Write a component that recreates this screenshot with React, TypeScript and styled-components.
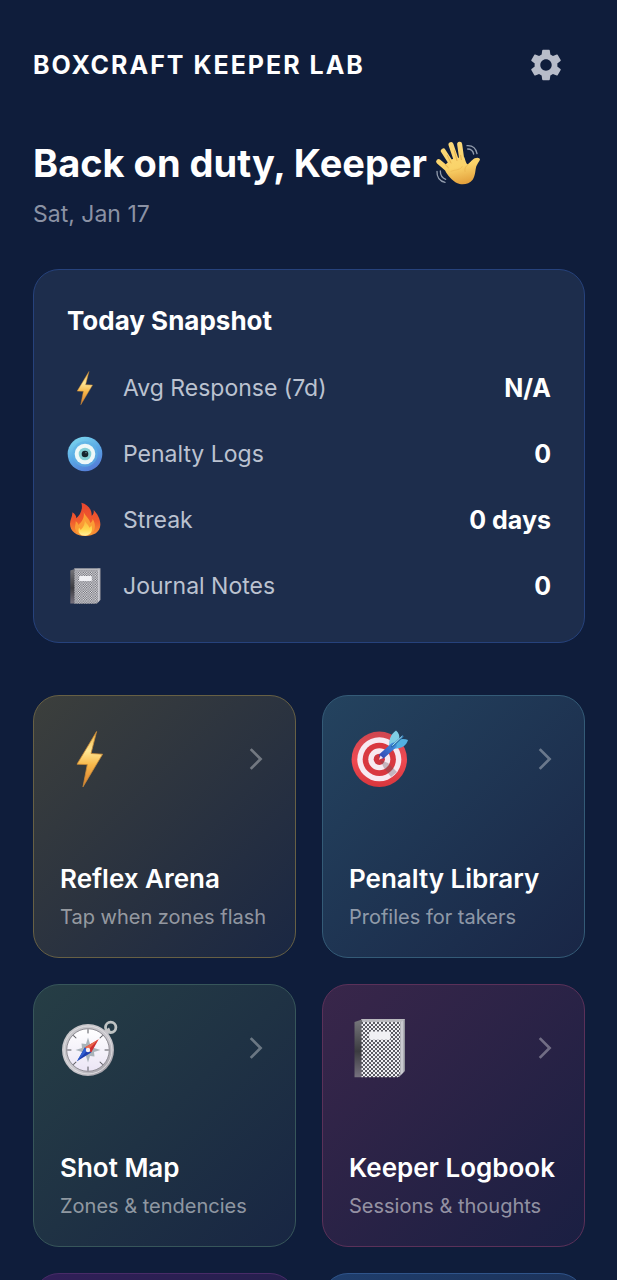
import React, { useId } from "react";
import styled, { createGlobalStyle } from "styled-components";
import { MdArrowForwardIos, MdSettings } from "react-icons/md";

const GlobalStyle = createGlobalStyle`
  *, *::before, *::after { box-sizing: border-box; }
  body { margin: 0; background: #0f1d3b; }
`;

const Screen = styled.main`
  height: 100vh;
  overflow-y: auto;
  scrollbar-width: none;
  padding: 25px 32px 32px 33px;
  background: #0f1d3b;
  color: #fff;
  font-family: Inter, "Liberation Sans", sans-serif;
`;

const TopBar = styled.header`
  display: flex;
  align-items: center;
  justify-content: space-between;
`;

const Brand = styled.span`
  font-size: 25px;
  line-height: 36px;
  font-weight: 700;
  letter-spacing: 2px;
`;

const IconButton = styled.button`
  display: grid;
  place-items: center;
  width: 79px;
  height: 79px;
  padding: 0;
  border: 0;
  border-radius: 50%;
  background: none;
  color: #b7bcc9;
  cursor: pointer;
`;

const Greeting = styled.h1`
  display: flex;
  align-items: center;
  gap: 8px;
  margin: 33px 0 9px;
  font-size: 38px;
  line-height: 52px;
  font-weight: 700;
`;

const DateLine = styled.p`
  margin: 0;
  font-size: 23px;
  line-height: 33px;
  color: #8b92a4;
`;

const Snapshot = styled.section`
  margin-top: 38px;
  padding: 33px 33px 36px;
  border: 1px solid #26427c;
  border-radius: 26px;
  background: #1d2d4c;
`;

const SnapshotTitle = styled.h2`
  margin: 0 0 29px;
  font-size: 26px;
  line-height: 36px;
  font-weight: 700;
`;

const StatList = styled.dl`
  display: grid;
  gap: 26px;
  margin: 0;
`;

const Stat = styled.div`
  display: flex;
  align-items: center;
  height: 40px;
`;

const StatLabel = styled.dt`
  display: flex;
  align-items: center;
  gap: 20px;
  flex: 1;
  font-size: 23px;
  line-height: 33px;
  color: #bbc2d0;
`;

const StatValue = styled.dd`
  margin: 0;
  font-size: 25px;
  line-height: 36px;
  font-weight: 700;
`;

const TileGrid = styled.nav`
  display: grid;
  grid-template-columns: 1fr 1fr;
  gap: 26px;
  margin-top: 52px;
`;

const Tile = styled.a<{ $from: string; $to: string; $edge: string }>`
  display: flex;
  flex-direction: column;
  justify-content: space-between;
  aspect-ratio: 1;
  min-width: 0;
  padding: 26px;
  border: 1px solid ${(p) => p.$edge};
  border-radius: 26px;
  background: linear-gradient(135deg, ${(p) => p.$from}, ${(p) => p.$to}) border-box;
  color: #fff;
  text-decoration: none;
`;

const TileTop = styled.span`
  display: flex;
  align-items: center;
  justify-content: space-between;
  height: 73px;
  color: rgba(255, 255, 255, 0.34);
`;

const TileText = styled.span`
  display: grid;
  gap: 6px;
  white-space: nowrap;
`;

const TileTitle = styled.strong`
  font-size: 26px;
  line-height: 36px;
  font-weight: 600;
`;

const TileHint = styled.span`
  font-size: 20px;
  line-height: 28px;
  color: rgba(255, 255, 255, 0.52);
`;

type ArtProps = { size: number };

function Bolt({ size }: ArtProps) {
  const id = useId();
  return (
    <svg width={size} height={size} viewBox="0 0 60 60" aria-hidden="true">
      <defs>
        <linearGradient id={id} x1="0" y1="0" x2="0" y2="1">
          <stop offset="0" stopColor="#f3b544" />
          <stop offset="0.35" stopColor="#ffe795" />
          <stop offset="0.6" stopColor="#f8b94b" />
          <stop offset="1" stopColor="#d97a2c" />
        </linearGradient>
      </defs>
      <path
        d="M36.6 2.5 L31 24.5 L42.6 25.2 L23 57.8 L27.3 35.6 L17 35.2 Z"
        fill={`url(#${id})`}
        stroke="#c98a37"
        strokeWidth="0.8"
        strokeLinejoin="round"
      />
    </svg>
  );
}

function Nazar({ size }: ArtProps) {
  const id = useId();
  return (
    <svg width={size} height={size} viewBox="36 227 108 108" aria-hidden="true">
      <defs>
        <linearGradient id={id} x1="0.2" y1="0" x2="0.7" y2="1">
          <stop offset="0" stopColor="#7dd8ef" />
          <stop offset="0.5" stopColor="#5aa8e6" />
          <stop offset="1" stopColor="#5479d6" />
        </linearGradient>
      </defs>
      <circle cx="90" cy="281" r="52" fill={`url(#${id})`} />
      <circle cx="90" cy="281" r="38" fill="#5fb2e4" opacity="0.6" />
      <circle cx="90" cy="281" r="31" fill="#eef8f8" />
      <circle cx="90" cy="281" r="19" fill="#83cfd6" />
      <circle cx="90" cy="281" r="10" fill="#15242e" />
      <circle cx="93" cy="277" r="2" fill="#7da6b1" />
    </svg>
  );
}

function Flame({ size }: ArtProps) {
  const id = useId();
  return (
    <svg width={size} height={size} viewBox="36 36 108 108" aria-hidden="true">
      <defs>
        <linearGradient id={`${id}o`} x1="0" y1="0" x2="0" y2="1">
          <stop offset="0" stopColor="#e8452e" />
          <stop offset="0.55" stopColor="#f05a2d" />
          <stop offset="1" stopColor="#f99a35" />
        </linearGradient>
        <linearGradient id={`${id}i`} x1="0" y1="0" x2="0" y2="1">
          <stop offset="0" stopColor="#fbae3b" />
          <stop offset="0.6" stopColor="#ffd64c" />
          <stop offset="1" stopColor="#fff09a" />
        </linearGradient>
      </defs>
      <path
        d="M79 38 C98 43 111 58 110 77 C115 75 117 68 116 60 C127 71 137 88 136 105 C135 126 116 138 91 138 C65 138 45 124 45 102 C45 88 53 79 52 67 C60 71 64 78 64 85 C75 75 85 58 79 38 Z"
        fill={`url(#${id}o)`}
      />
      <path
        d="M86 66 C91 80 104 85 106 99 C110 97 113 92 113 87 C122 100 122 117 114 126 C108 134 100 137 90 137 C75 137 62 130 60 115 C59 107 63 102 62 94 C67 97 70 101 70 105 C82 94 89 82 86 66 Z"
        fill="#fb9c35"
      />
      <path
        d="M89 88 C90 99 101 104 103 113 C106 112 108 109 109 106 C115 121 108 136 91 137 C75 137 67 127 72 113 C74 115 76 117 77 120 C86 112 91 101 89 88 Z"
        fill={`url(#${id}i)`}
      />
    </svg>
  );
}

function Notebook({ size }: ArtProps) {
  const id = useId();
  return (
    <svg width={size} height={size} viewBox="0 0 60 60" aria-hidden="true">
      <defs>
        <pattern id={`${id}p`} width="4" height="4" patternUnits="userSpaceOnUse">
          <rect width="4" height="4" fill="#f0f0f4" />
          <rect width="2" height="2" fill="#5c5c64" />
          <rect x="2" y="2" width="2" height="2" fill="#5c5c64" />
        </pattern>
        <linearGradient id={`${id}s`} x1="0" y1="0" x2="0" y2="1">
          <stop offset="0" stopColor="#77777c" />
          <stop offset="0.55" stopColor="#3b3b40" />
          <stop offset="1" stopColor="#77727f" />
        </linearGradient>
        <linearGradient id={`${id}e`} gradientUnits="userSpaceOnUse" x1="50" y1="0" x2="56" y2="0">
          <stop offset="0" stopColor="#8a8a92" />
          <stop offset="0.5" stopColor="#d7d7dd" />
          <stop offset="1" stopColor="#85858e" />
        </linearGradient>
      </defs>
      <path d="M12 1 H56 V53 L50 59 H12 Z" fill={`url(#${id}e)`} />
      <path d="M12 1 H56 L52 4 H13 Z" fill="#b9b9be" />
      <path d="M5.5 4 L13 1.5 V59.3 H5.5 Z" fill={`url(#${id}s)`} />
      <path d="M12.5 4 H51 V56 L49 59.3 H12.5 Z" fill={`url(#${id}p)`} />
      <rect x="20.3" y="13.5" width="21" height="8.2" rx="1" fill="#f0f0f4" />
    </svg>
  );
}

function Target({ size }: ArtProps) {
  const id = useId();
  return (
    <svg width={size} height={size} viewBox="0 0 60 60" aria-hidden="true">
      <defs>
        <linearGradient id={`${id}r`} x1="0" y1="0" x2="0" y2="1">
          <stop offset="0" stopColor="#cf4650" />
          <stop offset="0.5" stopColor="#ef4a52" />
          <stop offset="1" stopColor="#d8363d" />
        </linearGradient>
        <linearGradient id={`${id}d`} gradientUnits="userSpaceOnUse" x1="32" y1="28" x2="46" y2="15">
          <stop offset="0" stopColor="#3549b4" />
          <stop offset="1" stopColor="#3f8fe0" />
        </linearGradient>
      </defs>
      <circle cx="30.3" cy="30.3" r="27.7" fill={`url(#${id}r)`} />
      <circle cx="30.3" cy="30.3" r="22" fill="#f7e9f1" />
      <circle cx="30.3" cy="30.3" r="16.6" fill="#d93840" />
      <circle cx="30.3" cy="30.3" r="11" fill="#f7e9f1" />
      <circle cx="30.3" cy="30.3" r="5.6" fill="#cf3540" />
      <path d="M31 31 L39 34 L48 43 L42 48 L35 39 Z" fill="#66555f" opacity="0.35" />
      <path d="M40 16.5 C40 10 42 5 47 1.5 C50 4 51 7 50 11 L45.5 16 Z" fill="#7fcde4" />
      <path d="M44.8 16.5 L49 11 C52 9.5 56 9.5 59 11 C57.5 16 53.5 19.5 45 19.8 Z" fill="#52b0e0" />
      <path d="M33.4 26.6 L44.6 16.6" stroke={`url(#${id}d)`} strokeWidth="6" strokeLinecap="round" />
      <path d="M43 17.5 L53.5 7.5" stroke="#2c6fa8" strokeWidth="2.2" strokeLinecap="round" />
      <path d="M43.6 16.4 L53 7.5" stroke="#a5e2f2" strokeWidth="1" strokeLinecap="round" />
      <path d="M30 30.7 L31.6 26.5 L34 29 Z" fill="#f5e8f0" />
    </svg>
  );
}

const COMPASS_TICKS = [0, 45, 90, 135, 180, 225, 270, 315];

function Compass({ size }: ArtProps) {
  const id = useId();
  return (
    <svg width={size} height={size} viewBox="0 0 60 60" aria-hidden="true">
      <defs>
        <linearGradient id={`${id}c`} x1="0" y1="0" x2="1" y2="1">
          <stop offset="0" stopColor="#c4c4c7" />
          <stop offset="0.6" stopColor="#c9c6cc" />
          <stop offset="1" stopColor="#938f98" />
        </linearGradient>
        <linearGradient id={`${id}f`} x1="0" y1="0" x2="0" y2="1">
          <stop offset="0" stopColor="#ffffff" />
          <stop offset="1" stopColor="#ebe5f5" />
        </linearGradient>
      </defs>
      <circle cx="50.7" cy="9.3" r="5.2" fill="none" stroke="#bfc3c3" strokeWidth="2.8" />
      <path d="M44 13 L49 9.5 L50.5 12.5 L47.5 17 Z" fill="#c3c3c5" />
      <circle cx="28" cy="32" r="26" fill={`url(#${id}c)`} />
      <circle cx="28" cy="32" r="24" fill="none" stroke="#dedde0" strokeWidth="1" />
      <circle cx="28" cy="32" r="21.3" fill={`url(#${id}f)`} stroke="#8d8b92" strokeWidth="1" />
      {COMPASS_TICKS.map((angle) => (
        <path
          key={angle}
          d="M28 11.2 V15.4"
          stroke="#55555b"
          strokeWidth="1"
          transform={`rotate(${angle} 28 32)`}
        />
      ))}
      <path
        d="M28 19.5 L30 26 L34.5 25.5 L34 30 L40.5 32 L34 34 L34.5 38.5 L30 38 L28 44.5 L26 38 L21.5 38.5 L22 34 L15.5 32 L22 30 L21.5 25.5 L26 26 Z"
        fill="#a9b3b9"
      />
      <path d="M38.7 21.3 L31.2 34.6 L24.8 29.4 Z" fill="#cf2e31" />
      <path d="M38.7 21.3 L28 32 L24.8 29.4 Z" fill="#e9694d" />
      <path d="M17 43.3 L31.2 34.6 L24.8 29.4 Z" fill="#1e3fae" />
      <path d="M17 43.3 L28 32 L24.8 29.4 Z" fill="#2f5fd0" />
      <circle cx="28" cy="32" r="2.2" fill="#f4eef5" />
    </svg>
  );
}

function Wave({ size }: ArtProps) {
  const id = useId();
  return (
    <svg width={size} height={size} viewBox="44 34 138 138" aria-hidden="true">
      <defs>
        <linearGradient id={id} gradientUnits="userSpaceOnUse" x1="90" y1="38" x2="120" y2="168">
          <stop offset="0" stopColor="#fbd97a" />
          <stop offset="0.6" stopColor="#fad369" />
          <stop offset="1" stopColor="#e3a03c" />
        </linearGradient>
      </defs>
      <g stroke={`url(#${id})`} strokeWidth="15" strokeLinecap="round" fill="none">
        <path d="M55 99 L88 127" />
        <path d="M69 67 L98 112" />
        <path d="M92 48 L111 104" />
        <path d="M118 47 L126 104" />
      </g>
      <path
        d="M74 110 C82 100 92 92 104 88 L132 86 C135 96 137 104 141 107 C148 105 153 95 163 89 C171 85 179 87 179 93 C175 101 171 105 168 113 C164 126 166 140 157 153 C148 165 132 169 118 166 C100 161 86 145 76 129 Z"
        fill={`url(#${id})`}
      />
      <g fill="none" stroke="#dc9f3c" strokeWidth="2" strokeLinecap="round">
        <path d="M81 80 L92 103" />
        <path d="M102 66 L110 96" />
        <path d="M121 80 L123 93" />
        <path d="M73 106 L84 117" />
        <path d="M92 128 C107 122 121 125 126 113" opacity="0.45" />
        <path d="M144 107 C136 113 132 118 134 128" opacity="0.6" />
      </g>
      <g fill="none" stroke="#929cad" strokeWidth="4" strokeLinecap="round">
        <path d="M140 51 C156 50 167 59 170 75" />
        <path d="M142 61 C151 61 158 67 160 76" />
        <path d="M50 128 C49 145 58 158 74 161" />
        <path d="M60 127 C60 139 66 148 76 152" />
      </g>
    </svg>
  );
}

const STATS = [
  { art: Bolt, label: "Avg Response (7d)", value: "N/A" },
  { art: Nazar, label: "Penalty Logs", value: "0" },
  { art: Flame, label: "Streak", value: "0 days" },
  { art: Notebook, label: "Journal Notes", value: "0" },
];

const TILES = [
  { art: Bolt, title: "Reflex Arena", hint: "Tap when zones flash", from: "#3c3f3c", to: "#1a2743", edge: "#676044" },
  { art: Target, title: "Penalty Library", hint: "Profiles for takers", from: "#24435f", to: "#192646", edge: "#345b77" },
  { art: Compass, title: "Shot Map", hint: "Zones & tendencies", from: "#263e45", to: "#182643", edge: "#37565a" },
  { art: Notebook, title: "Keeper Logbook", hint: "Sessions & thoughts", from: "#39264a", to: "#1a1f42", edge: "#5b3159" },
];

const MORE_TILES = [
  { from: "#311f58", to: "#1a1f42", edge: "#492b68" },
  { from: "#1f3e6d", to: "#192646", edge: "#2f548b" },
];

export default function App() {
  return (
    <Screen>
      <GlobalStyle />
      <TopBar>
        <Brand>BOXCRAFT KEEPER LAB</Brand>
        <IconButton type="button" aria-label="Settings">
          <MdSettings size={38} />
        </IconButton>
      </TopBar>

      <Greeting>
        Back on duty, Keeper
        <Wave size={46} />
      </Greeting>
      <DateLine>Sat, Jan 17</DateLine>

      <Snapshot>
        <SnapshotTitle>Today Snapshot</SnapshotTitle>
        <StatList>
          {STATS.map(({ art: Art, label, value }) => (
            <Stat key={label}>
              <StatLabel>
                <Art size={36} />
                {label}
              </StatLabel>
              <StatValue>{value}</StatValue>
            </Stat>
          ))}
        </StatList>
      </Snapshot>

      <TileGrid>
        {TILES.map(({ art: Art, title, hint, from, to, edge }) => (
          <Tile key={title} href="#" $from={from} $to={to} $edge={edge}>
            <TileTop>
              <Art size={60} />
              <MdArrowForwardIos size={26} />
            </TileTop>
            <TileText>
              <TileTitle>{title}</TileTitle>
              <TileHint>{hint}</TileHint>
            </TileText>
          </Tile>
        ))}
        {MORE_TILES.map(({ from, to, edge }) => (
          <Tile key={from} as="div" $from={from} $to={to} $edge={edge} />
        ))}
      </TileGrid>
    </Screen>
  );
}
